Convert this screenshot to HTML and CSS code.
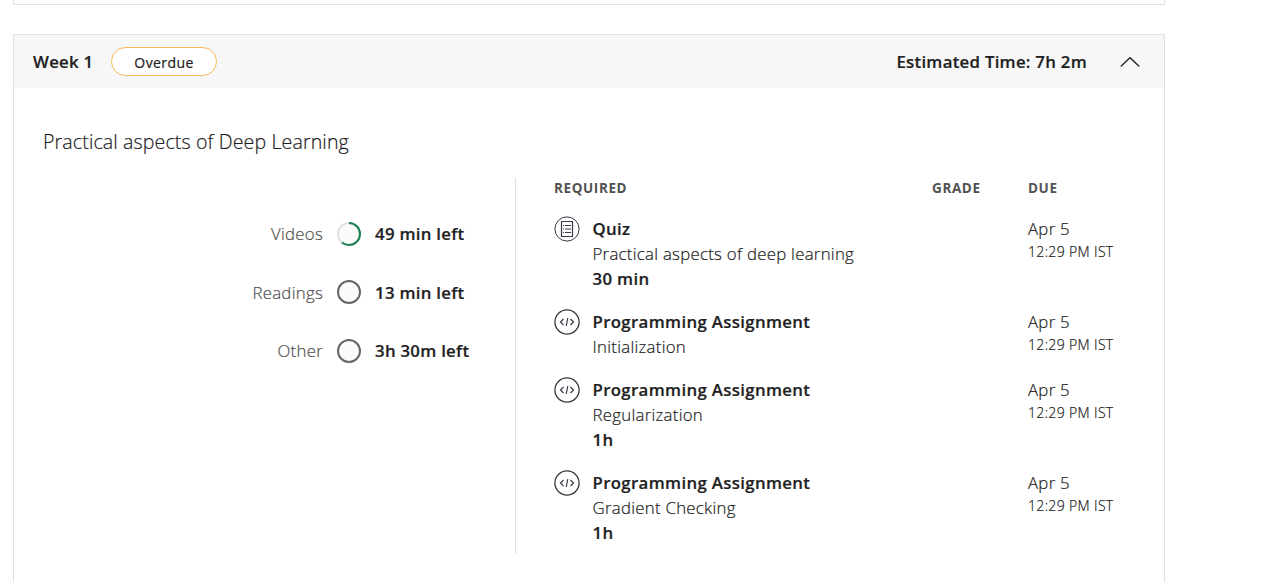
FILE: index.html
```html
<!DOCTYPE html>
<html lang="en">
<head>
<meta charset="utf-8">
<title>Course schedule</title>
<link rel="stylesheet" href="styles.css">
</head>
<body>
<svg class="symbols" aria-hidden="true">
  <symbol id="quiz" viewBox="0 0 26 26">
    <circle cx="13" cy="13" r="12.1" stroke-width="1"/>
    <path d="M7.5 5.5h11v15h-11z" stroke-width="1.2"/>
    <path d="M9 9.5h1M11 9.5h6M9 13h1M11 13h6M9 16.5h1M11 16.5h6" stroke-width="1"/>
  </symbol>
  <symbol id="code" viewBox="0 0 26 26">
    <circle cx="13" cy="13" r="12.1" stroke-width="1.3"/>
    <path d="M9.5 10 6.5 13l3 3M16.5 10l3 3-3 3M13.8 9l-1.6 8" stroke-width="1.2"/>
  </symbol>
</svg>
<main class="weeks">
  <section class="previous"></section>
  <section class="card">
    <header class="card-head">
      <h2 class="week">Week 1</h2>
      <span class="badge">Overdue</span>
      <span class="estimate">Estimated Time: 7h 2m</span>
      <svg class="chevron" viewBox="0 0 20 12"><path d="M.7 10.5 10 1.7l9.3 8.8"/></svg>
    </header>
    <div class="card-body">
      <h3 class="topic">Practical aspects of Deep Learning</h3>
      <div class="columns">
        <div class="progress">
          <div class="stat"><span class="label">Videos</span>
            <svg class="ring" viewBox="0 0 24 24"><circle class="track" cx="12" cy="12" r="11"/><circle class="done" cx="12" cy="12" r="11" pathLength="100" stroke-dasharray="61 100" transform="rotate(-90 12 12)"/></svg>
            <span class="left">49 min left</span></div>
          <div class="stat"><span class="label">Readings</span>
            <svg class="ring" viewBox="0 0 24 24"><circle class="idle" cx="12" cy="12" r="11"/></svg>
            <span class="left">13 min left</span></div>
          <div class="stat"><span class="label">Other</span>
            <svg class="ring" viewBox="0 0 24 24"><circle class="idle" cx="12" cy="12" r="11"/></svg>
            <span class="left">3h 30m left</span></div>
        </div>
        <div class="required">
          <div class="row titles"><span class="wide">Required</span><span>Grade</span><span>Due</span></div>
          <div class="row item"><svg class="icon"><use href="#quiz"/></svg>
            <div><strong>Quiz</strong><p>Practical aspects of deep learning</p><strong>30 min</strong></div>
            <div></div><div class="due"><p>Apr 5</p><small>12:29 PM IST</small></div></div>
          <div class="row item"><svg class="icon"><use href="#code"/></svg>
            <div><strong>Programming Assignment</strong><p>Initialization</p></div>
            <div></div><div class="due"><p>Apr 5</p><small>12:29 PM IST</small></div></div>
          <div class="row item"><svg class="icon"><use href="#code"/></svg>
            <div><strong>Programming Assignment</strong><p>Regularization</p><strong>1h</strong></div>
            <div></div><div class="due"><p>Apr 5</p><small>12:29 PM IST</small></div></div>
          <div class="row item"><svg class="icon"><use href="#code"/></svg>
            <div><strong>Programming Assignment</strong><p>Gradient Checking</p><strong>1h</strong></div>
            <div></div><div class="due"><p>Apr 5</p><small>12:29 PM IST</small></div></div>
        </div>
      </div>
    </div>
  </section>
</main>
</body>
</html>
```
FILE: styles.css
```css
* { box-sizing: border-box; }
html { overflow: hidden; }
body { margin: 0; height: 582px; overflow: hidden; background: #fff; color: #1f1f1f; font: 300 16.8px/25px "Open Sans", sans-serif; letter-spacing: .28px; -webkit-text-stroke: .22px; }
h2, h3, p { margin: 0; }
.symbols { display: none; }
.weeks { width: 1152px; margin-left: 13px; }
.previous { height: 5px; border: 1px solid #e1e1e1; border-top: 0; }
.card { height: 560px; margin-top: 29px; border: 1px solid #e1e1e1; }
.card-head { display: flex; align-items: center; height: 53px; padding: 0 24.5px 0 19px; background: #f7f7f7; }
.week, .estimate { font-size: 16.8px; font-weight: 600; }
.week { width: 60px; white-space: nowrap; }
.badge { display: flex; align-items: center; justify-content: center; width: 106px; height: 29px; margin-left: 18px; padding-top: 2px; border: 1px solid #f5bb57; border-radius: 15px; background: #fff; font-size: 14px; font-weight: 400; letter-spacing: .4px; }
.estimate { margin-left: auto; }
.chevron { width: 20px; height: 12px; margin-left: 32.5px; fill: none; stroke: #1f1f1f; stroke-width: 1.3; }
.card-body { padding: 39px 0 0 29px; }
.topic { font-size: 19.6px; font-weight: 300; line-height: 30px; letter-spacing: .11px; }
.columns { display: flex; height: 376px; margin-top: 21px; }
.progress { width: 473px; padding-top: 43px; border-right: 1px solid #e1e1e1; }
.stat { display: grid; grid-template-columns: 280px 24px 1fr; column-gap: 14px; align-items: center; height: 25px; margin-bottom: 33.5px; }
.label { text-align: right; color: #525252; }
.left, strong { font-weight: 600; }
.ring { width: 24px; height: 24px; fill: #fafafa; stroke-width: 2; }
.track { stroke: #e1e1e1; }
.done { fill: none; stroke: #1d8354; }
.idle { stroke: #666; }
.required { padding-left: 38px; }
.row { display: grid; grid-template-columns: 38.5px 339.5px 96px 110px; }
.titles { height: 38px; line-height: 20px; font-size: 13.5px; font-weight: 700; letter-spacing: .6px; text-transform: uppercase; color: #525252; -webkit-text-stroke: 0; }
.wide { grid-column: span 2; }
.item { margin-bottom: 18px; }
.icon { width: 26px; height: 26px; fill: none; stroke: #373a44; }
strong { display: block; letter-spacing: .35px; }
small { display: block; font-size: 14px; line-height: 22px; letter-spacing: .35px; }
```
